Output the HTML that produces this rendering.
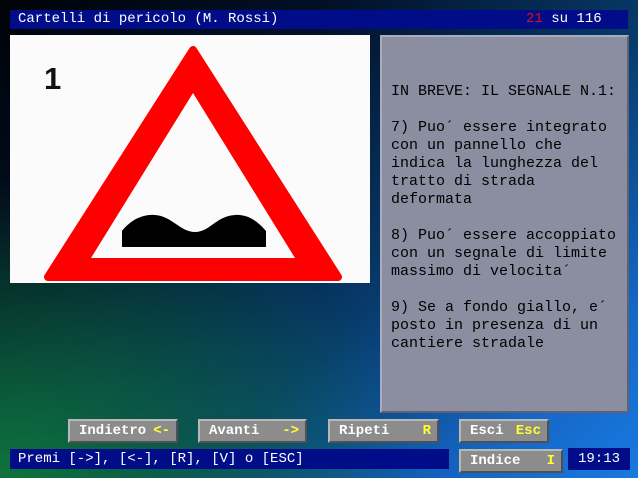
<!DOCTYPE html>
<html><head><meta charset="utf-8"><style>
*{margin:0;padding:0;box-sizing:border-box}
html,body{width:638px;height:478px;overflow:hidden}
body{position:relative;font-family:"Liberation Mono",monospace;
background:
radial-gradient(ellipse 420px 300px at 0px 478px, rgba(14,120,60,0.95), rgba(14,110,60,0) 100%),
linear-gradient(135deg,#000308 0%,#021028 30%,#073a6a 60%,#1468c8 85%,#1a78e0 100%);}
.abs{position:absolute}
.bar{background:#000c88;color:#fff;font-size:14px;line-height:19px}
.btn{position:absolute;background:#8c8c8c;border:2px solid;border-color:#b8b8b8 #505050 #505050 #b8b8b8;color:#fff;font-size:14px;font-weight:bold;line-height:20px;padding-left:9px}
.btn b{position:absolute;right:6px;top:0;color:#ffff30}
pre{font-family:"Liberation Mono",monospace;font-size:15px;line-height:18px;color:#000}
</style></head><body>
<div class="abs bar" style="left:10px;top:10px;width:618px;height:19px;padding-left:8px">Cartelli di pericolo (M. Rossi)<span style="position:absolute;left:516px"><span style="color:#e01010">21</span> su 116</span></div>
<div class="abs" style="left:10px;top:35px;width:360px;height:248px;background:#fbfbfb">
<svg width="360" height="248" viewBox="10 35 360 248">
<text x="44" y="89" font-family="Liberation Sans" font-weight="bold" font-size="31" fill="#111">1</text>
<path d="M193 50 L338 277 L48 277 Z" fill="#f00" stroke="#f00" stroke-width="8" stroke-linejoin="round"/>
<path d="M193 93 L295 258 L91 258 Z" fill="#fbfbfb"/>
<path d="M122 247 L122 231 C132 218 145 214 155 215 C172 216 180 232 195 232 C210 232 216 216 235 215 C250 214 260 224 266 231 L266 247 Z" fill="#000"/>
</svg></div>
<div class="abs" style="left:380px;top:35px;width:249px;height:378px;background:#8a8ea0;border:2px solid;border-color:#a8acc0 #606070 #606070 #a8acc0">
<pre style="position:absolute;left:9px;top:46px">IN BREVE: IL SEGNALE N.1:

7) Puo´ essere integrato
con un pannello che
indica la lunghezza del
tratto di strada
deformata

8) Puo´ essere accoppiato
con un segnale di limite
massimo di velocita´

9) Se a fondo giallo, e´
posto in presenza di un
cantiere stradale</pre></div>
<div class="btn" style="left:68px;top:419px;width:110px;height:24px">Indietro<b>&lt;-</b></div>
<div class="btn" style="left:198px;top:419px;width:109px;height:24px">Avanti<b>-&gt;</b></div>
<div class="btn" style="left:328px;top:419px;width:111px;height:24px">Ripeti<b>R</b></div>
<div class="btn" style="left:459px;top:419px;width:90px;height:24px">Esci<b>Esc</b></div>
<div class="abs bar" style="left:10px;top:449px;width:439px;height:20px;padding-left:8px;line-height:20px">Premi [-&gt;], [&lt;-], [R], [V] o [ESC]</div>
<div class="btn" style="left:459px;top:449px;width:104px;height:24px">Indice<b>I</b></div>
<div class="abs bar" style="left:568px;top:448px;width:62px;height:22px;line-height:22px;text-align:center">19:13</div>
</body></html>
